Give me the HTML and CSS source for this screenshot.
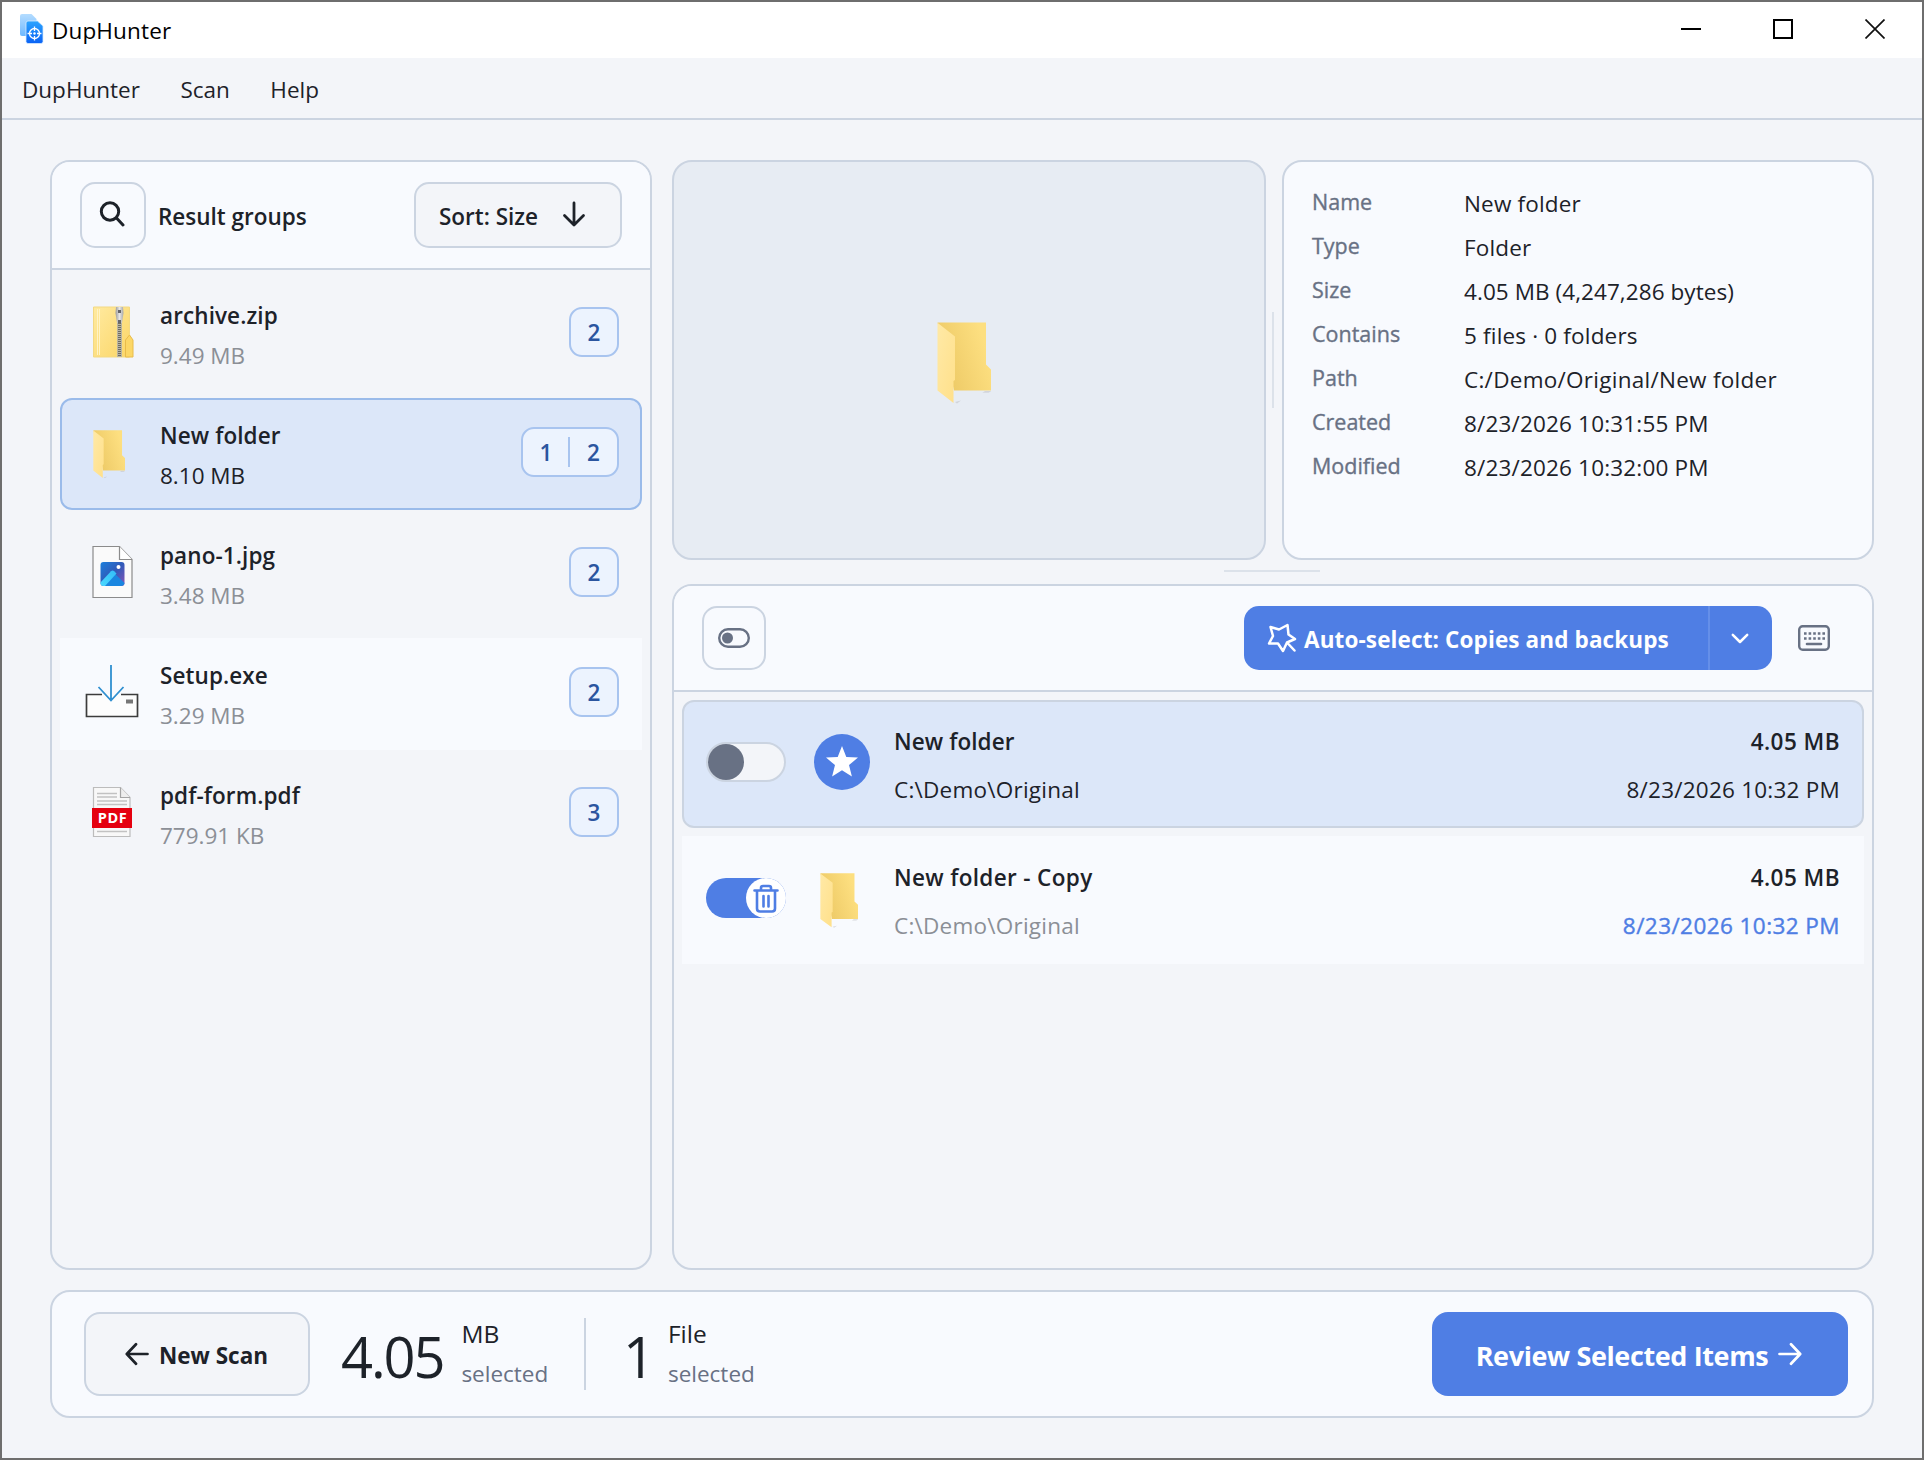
FILE: index.html
```html
<!DOCTYPE html>
<html lang="en">
<head>
<meta charset="utf-8">
<title>DupHunter</title>
<link rel="stylesheet" href="styles.css">
</head>
<body>
<svg class="defs" width="0" height="0" aria-hidden="true">
  <defs>
    <linearGradient id="folderBack" x1="0" y1="1" x2="1" y2="0.6"><stop offset="0" stop-color="#e9c45f"/><stop offset="1" stop-color="#fddf80"/></linearGradient>
    <linearGradient id="folderFlap" x1="0" y1="0" x2="1" y2="1"><stop offset="0" stop-color="#ffe9a6"/><stop offset="1" stop-color="#ffe08a"/></linearGradient>
    <linearGradient id="zipBody" x1="0" y1="0" x2="1" y2="1"><stop offset="0" stop-color="#ffeaa0"/><stop offset="1" stop-color="#fbd667"/></linearGradient>
    <linearGradient id="zipPull" x1="0" y1="0" x2="1" y2="0"><stop offset="0" stop-color="#9b9b9b"/><stop offset="0.5" stop-color="#e6e6e6"/><stop offset="1" stop-color="#a8a8a8"/></linearGradient>
    <linearGradient id="photoSky" x1="0" y1="0" x2="1" y2="1"><stop offset="0" stop-color="#1b7fdc"/><stop offset="0.5" stop-color="#3159b8"/><stop offset="1" stop-color="#8a55b5"/></linearGradient>
    <linearGradient id="photoHill" x1="1" y1="0" x2="0" y2="1"><stop offset="0" stop-color="#33bdf7"/><stop offset="1" stop-color="#4bd8ff"/></linearGradient>
    <linearGradient id="appBack" x1="0" y1="0" x2="0" y2="1"><stop offset="0" stop-color="#b4dcff"/><stop offset="1" stop-color="#6fb9ff"/></linearGradient>
    <linearGradient id="appFront" x1="0" y1="0" x2="0" y2="1"><stop offset="0" stop-color="#2ba4ff"/><stop offset="1" stop-color="#0a62f5"/></linearGradient>
    <symbol id="folder" viewBox="0 0 54 82" preserveAspectRatio="none">
      <path d="M48 69h6.500l-3 1.800h-6zM18 80l6-1.500-4 3z" fill="#c9cbd0" opacity="0.700"/>
      <path d="M0.500 0.500H49V42.500L54 47.500V68.500H17z" fill="url(#folderBack)"/>
      <path d="M0.500 0.700L18 14.500V58L16.500 59V81L0.500 68.500z" fill="url(#folderFlap)"/>
    </symbol>
  </defs>
</svg>
<div class="window">
  <header class="titlebar">
    <svg class="app-icon" viewBox="0 0 26 32">
      <path d="M3 1h9.500l5 5v17H3a2 2 0 0 1-2-2V3a2 2 0 0 1 2-2z" fill="url(#appBack)"/>
      <path d="M9 8h9.500l5.500 5v15.500a2 2 0 0 1-2 2H9a2 2 0 0 1-2-2V10a2 2 0 0 1 2-2z" fill="url(#appFront)" stroke="#d6ebff" stroke-width="0.800"/>
      <g fill="none" stroke="#fff" stroke-width="1.300"><circle cx="15.500" cy="20.500" r="5"/><path d="M15.500 13.500v4.500M15.500 23v4.500M8.500 20.500h4.500M18 20.500h4.500"/></g>
      <circle cx="15.500" cy="20.500" r="1.200" fill="#fff"/>
    </svg>
    <span class="title">DupHunter</span>
    <div class="controls">
      <svg viewBox="0 0 20 20"><path d="M0 10h20" stroke="#000" stroke-width="2"/></svg>
      <svg viewBox="0 0 20 20"><path d="M1 1h18v18H1z" fill="none" stroke="#000" stroke-width="2"/></svg>
      <svg viewBox="0 0 20 20"><path d="M0.500 0.500l19 19M19.500 0.500l-19 19" stroke="#111" stroke-width="1.700"/></svg>
    </div>
  </header>
  <nav class="menu"><span>DupHunter</span><span>Scan</span><span>Help</span></nav>

  <main class="content">
    <div class="workspace">
      <section class="panel groups">
        <div class="panel-head">
          <button class="btn icon-btn search"><svg width="26" height="26" viewBox="0 0 26 26" fill="none" stroke="#1d2229" stroke-width="3" stroke-linecap="round"><circle cx="11" cy="10.500" r="8.700"/><path d="M17.500 17l6.500 7"/></svg></button>
          <span class="head-title">Result groups</span>
          <button class="btn sort"><span>Sort: Size</span><svg width="24" height="26" viewBox="0 0 24 26" fill="none" stroke="#1d2229" stroke-width="2.800" stroke-linecap="round" stroke-linejoin="round"><path d="M12 2v22M2.500 14.500l9.500 9.500 9.500-9.500"/></svg></button>
        </div>
        <div class="group-list">
          <div class="group">
            <svg class="file-icon" viewBox="0 0 56 56">
              <path d="M9.500 3H45.500V53H9.500z" fill="url(#zipBody)" stroke="#f3d983" stroke-width="1"/>
              <path d="M13.500 5v46M15.500 5v46" stroke="#fff3c4" stroke-width="1"/>
              <path d="M41.500 53V36l4-5 3.500 5v17z" fill="#fcd766" stroke="#e9bc4b" stroke-width="1"/>
              <path d="M33 18h5v35h-5z" fill="#b9b5a2"/>
              <path d="M35.500 19v34" stroke="#6e6c63" stroke-width="3" stroke-dasharray="1 1"/>
              <path d="M32 3h7l0.500 6-1.500 10h-5L31.500 9z" fill="url(#zipPull)"/>
              <path d="M34 6h3v3h-3zM34 16h3v3h-3z" fill="#66666a"/>
            </svg>
            <div class="group-text"><div class="name">archive.zip</div><div class="size">9.49 MB</div></div>
            <div class="badge"><span>2</span></div>
          </div>
          <div class="group selected">
            <svg class="file-icon" viewBox="0 0 56 56"><use href="#folder" x="9" y="6" width="32" height="48.500"/></svg>
            <div class="group-text"><div class="name">New folder</div><div class="size">8.10 MB</div></div>
            <div class="badge double"><span>1</span><span>2</span></div>
          </div>
          <div class="group">
            <svg class="file-icon" viewBox="0 0 56 56">
              <path d="M9 2.500H35.500L48 15.500V53.500H9z" fill="#fafafa" stroke="#8b8b8b" stroke-width="1.200"/>
              <path d="M35.500 2.500v13H48" fill="#fff" stroke="#8b8b8b" stroke-width="1.200"/>
              <rect x="16.500" y="18" width="24" height="24" rx="3" fill="url(#photoSky)"/>
              <path d="M19 42L29 28l11.500 11q-.5 3-3.500 3z" fill="#1a86e0"/>
              <path d="M16.500 38.500L27 27.300q1.600-1.400 3.200 0l2.300 2.300L21 42h-1.500q-3 0-3-3z" fill="url(#photoHill)"/>
              <circle cx="34.500" cy="23" r="2" fill="#fff"/>
            </svg>
            <div class="group-text"><div class="name">pano-1.jpg</div><div class="size">3.48 MB</div></div>
            <div class="badge"><span>2</span></div>
          </div>
          <div class="group hover">
            <svg class="file-icon" viewBox="0 0 56 56">
              <path d="M18 30.500H2.500V52.500H53.500V30.500H37" fill="#fdfdfd" stroke="#3c3c3c" stroke-width="1.700"/>
              <path d="M42 35.500h7v4h-7z" fill="#777"/>
              <path d="M27 1v35M14.500 23L27 36.500 39.500 23" fill="none" stroke="#2f8fd0" stroke-width="1.800"/>
            </svg>
            <div class="group-text"><div class="name">Setup.exe</div><div class="size">3.29 MB</div></div>
            <div class="badge"><span>2</span></div>
          </div>
          <div class="group">
            <svg class="file-icon" viewBox="0 0 56 56">
              <path d="M9.500 3.500H36.500L46 13.500V52.500H9.500z" fill="#f8f8f8" stroke="#bcbcbc" stroke-width="1.200"/>
              <path d="M36.500 3.500v10H46" fill="#eee" stroke="#a5a5a5" stroke-width="1.200"/>
              <path d="M13 9.500h20M13 13h20M13 17h30M13 20.500h30M13 47.500h30" stroke="#c2c2c2" stroke-width="1.300"/>
              <path d="M8 24h40v20H8z" fill="#e5000f"/>
              <text x="28.500" y="39" text-anchor="middle" class="pdf-label">PDF</text>
            </svg>
            <div class="group-text"><div class="name">pdf-form.pdf</div><div class="size">779.91 KB</div></div>
            <div class="badge"><span>3</span></div>
          </div>
        </div>
      </section>

      <div class="right">
        <div class="top">
          <section class="preview"><svg width="54" height="82"><use href="#folder" width="54" height="82"/></svg></section>
          <div class="split-v"></div>
          <dl class="details">
            <dt>Name</dt><dd>New folder</dd>
            <dt>Type</dt><dd>Folder</dd>
            <dt>Size</dt><dd class="exact">4.05 MB (4,247,286 bytes)</dd>
            <dt>Contains</dt><dd>5 files · 0 folders</dd>
            <dt>Path</dt><dd class="location">C:/Demo/Original/New folder</dd>
            <dt>Created</dt><dd>8/23/2026 10:31:55 PM</dd>
            <dt>Modified</dt><dd>8/23/2026 10:32:00 PM</dd>
          </dl>
        </div>
        <div class="split-h"></div>
        <section class="panel files">
          <div class="files-head">
            <button class="btn icon-btn toggle-all"><svg width="32" height="20" viewBox="0 0 32 20"><rect x="1.200" y="1.200" width="29.600" height="17.600" rx="8.800" fill="none" stroke="#687184" stroke-width="2.400"/><circle cx="9.500" cy="10" r="5.500" fill="#687184"/></svg></button>
            <div class="auto">
              <button class="auto-main"><svg width="30" height="30" viewBox="0 0 30 30" fill="none" stroke="#fff" stroke-width="2.500" stroke-linejoin="round" stroke-linecap="round"><path d="M3.500 4L12 6.500 20.500 2l1 9.500L28 16l-8 3.500-4 8.500-5-7.500L2 20.500l4-7.500zM20 19.500l7.500 8"/></svg><span>Auto-select: Copies and backups</span></button>
              <button class="auto-drop"><svg width="18" height="11" viewBox="0 0 18 11" fill="none" stroke="#fff" stroke-width="2.500" stroke-linecap="round" stroke-linejoin="round"><path d="M1.800 1.800L9 9l7.200-7.200"/></svg></button>
            </div>
            <svg class="keyboard" width="32" height="26" viewBox="0 0 32 26"><rect x="1.200" y="1.200" width="29.600" height="23.600" rx="3.500" fill="none" stroke="#687184" stroke-width="2.400"/><path d="M6 8.500h21M6 13.500h21" stroke="#687184" stroke-width="2.600" stroke-dasharray="2.600 2"/><path d="M9 19h14" stroke="#687184" stroke-width="2.600" stroke-linecap="round"/></svg>
          </div>
          <div class="file-list">
            <div class="file current">
              <div class="switch"><i></i></div>
              <div class="thumb"><svg width="56" height="56" viewBox="0 0 56 56"><circle cx="28" cy="28" r="28" fill="#4f7ee4"/><path d="M28 12l4.300 10.900 11.700.7-9 7.500 2.900 11.400L28 36.200l-9.900 6.300L21 31.100l-9-7.500 11.700-.7z" fill="#fff"/></svg></div>
              <div class="file-text"><div class="name">New folder</div><div class="path">C:\Demo\Original</div></div>
              <div class="file-meta"><div class="bytes">4.05 MB</div><div class="date">8/23/2026 10:32 PM</div></div>
            </div>
            <div class="file marked">
              <div class="switch on"><i><svg width="26" height="29" viewBox="0 0 26 29" fill="none" stroke="#4f7ee4" stroke-width="2.600" stroke-linecap="round" stroke-linejoin="round"><path d="M1.500 6.500h23M8 6V4q0-2 2-2h6q2 0 2 2v2M4 7v17.500q0 3 3 3h12q3 0 3-3V7M10.500 12v10.500M15.500 12v10.500"/></svg></i></div>
              <div class="thumb"><svg width="38" height="55"><use href="#folder" width="38" height="55"/></svg></div>
              <div class="file-text"><div class="name">New folder - Copy</div><div class="path">C:\Demo\Original</div></div>
              <div class="file-meta"><div class="bytes">4.05 MB</div><div class="date">8/23/2026 10:32 PM</div></div>
            </div>
          </div>
        </section>
      </div>
    </div>

    <footer class="footer">
      <button class="btn new-scan"><svg width="24" height="24" viewBox="0 0 24 24" fill="none" stroke="#1d2229" stroke-width="2.700" stroke-linecap="round" stroke-linejoin="round"><path d="M22.500 12H2M11 2.300L1.800 12l9.200 9.700"/></svg><span>New Scan</span></button>
      <div class="stat mb"><b>4.05</b><div><div class="unit">MB</div><div class="note">selected</div></div></div>
      <div class="rule"></div>
      <div class="stat count"><b>1</b><div><div class="unit">File</div><div class="note">selected</div></div></div>
      <button class="review"><span>Review Selected Items</span><svg width="24" height="24" viewBox="0 0 24 24" fill="none" stroke="#fff" stroke-width="2.700" stroke-linecap="round" stroke-linejoin="round"><path d="M1.500 12H22M13 2.300L22.200 12 13 21.700"/></svg></button>
    </footer>
  </main>
</div>
</body>
</html>
```
FILE: styles.css
```css
* { box-sizing: border-box; }
body { margin: 0; font-family: "Open Sans", "Noto Sans", sans-serif; font-size: 22.5px; color: #1d2229; }
button { font: inherit; color: inherit; padding: 0; border: 0; background: none; display: flex; align-items: center; }
svg { display: block; flex: none; }
.defs { position: absolute; }

.window { width: 1924px; height: 1460px; border: 2px solid #6e6e6e; background: #f3f5f9; display: flex; flex-direction: column; }
.titlebar { height: 56px; background: #fff; display: flex; align-items: center; padding: 0 37px 0 17px; color: #000; }
.app-icon { width: 26px; height: 32px; margin-bottom: 2px; }
.title { margin-left: 7px; letter-spacing: 0.15px; }
.controls { margin-left: auto; display: flex; gap: 72px; margin-bottom: 2px; }
.controls svg { width: 20px; height: 20px; }
.menu { height: 62px; border-bottom: 2px solid #cbd4e1; display: flex; align-items: center; gap: 40.5px; padding-left: 20px; padding-top: 2px; }

.content { flex: 1; padding: 40px 48px; display: flex; flex-direction: column; gap: 20px; }
.workspace { height: 1110px; display: flex; gap: 20px; }
.panel { border: 2px solid #cbd4e1; border-radius: 20px; overflow: hidden; }
.btn { border: 2px solid #cbd4e1; border-radius: 15px; justify-content: center; background: #f3f5f9; }
.icon-btn { background: #f8fafe; }

.groups { width: 602px; }
.panel-head { height: 108px; background: #f8fafe; border-bottom: 2px solid #cbd4e1; display: flex; align-items: center; padding: 0 28px; }
.search { width: 66px; height: 66px; padding: 0 2px 2px 0; }
.head-title { margin-left: 12px; font-weight: 600; margin-top: 2px; }
.sort { margin-left: auto; width: 208px; height: 66px; gap: 24px; font-weight: 600; padding: 2px 11px 0 0; }
.sort svg { margin-bottom: 5px; }
.group-list { padding: 8px; display: flex; flex-direction: column; gap: 8px; }
.group { height: 112px; display: flex; align-items: center; padding: 0 23px 0 24px; }
.group.hover { background: #f8fafe; }
.group.selected { background: #dce7f9; border: 2px solid #9abbea; border-radius: 12px; padding: 0 21px 0 22px; }
.file-icon { width: 56px; height: 56px; margin-bottom: 4px; }
.pdf-label { font: 700 14.500px "Open Sans", sans-serif; fill: #fff; letter-spacing: 0.5px; }
.group-text { margin-left: 20px; line-height: 40px; padding-top: 3px; }
.name { font-weight: 600; letter-spacing: 0.1px; }
.size { color: #8b8f96; }
.path { color: #8b8f96; letter-spacing: 0.23px; }
.selected .size, .current .path { color: #1d2229; }
.badge { margin-left: auto; margin-bottom: 4px; height: 50px; border: 2px solid #a8c4ef; border-radius: 13px; background: #ecf3fe; color: #2b559f; font-weight: 600; display: flex; align-items: center; }
.badge span { width: 46px; text-align: center; line-height: 28px; position: relative; padding-top: 2px; }
.badge.double span:first-child { width: 45px; padding-left: 1px; }
.badge.double span + span { width: 49px; border-left: 2px solid #a8c4ef; }

.right { width: 1202px; display: flex; flex-direction: column; }
.top { height: 400px; display: flex; }
.preview { width: 594px; border: 2px solid #cbd4e1; border-radius: 20px; background: #e7ecf3; display: flex; align-items: center; justify-content: center; padding: 5px 0 0 0; }
.preview svg { margin-right: 10px; }
.split-v { width: 2px; height: 96px; background: #dce2ea; margin: 152px 8px 0 6px; }
.details { margin: 0; width: 592px; border: 2px solid #cbd4e1; border-radius: 20px; background: #f8fafe; padding: 20px 28px; display: grid; grid-template-columns: 152px 1fr; grid-auto-rows: 44px; line-height: 44px; align-content: start; }
dt { color: #687184; font-size: 21.500px; margin-top: -2px; -webkit-text-stroke: 0.35px #687184; }
dd { margin: 0; letter-spacing: 0.17px; }
dd.exact { letter-spacing: 0.07px; }
dd.location { letter-spacing: 0.27px; }
.split-h { width: 96px; height: 2px; background: #dce2ea; margin: 10px 0 12px 552px; }

.files { flex: 1; }
.files-head { height: 106px; background: #f8fafe; border-bottom: 2px solid #cbd4e1; display: flex; align-items: center; padding: 0 42px 0 28px; }
.toggle-all { width: 64px; height: 64px; }
.auto { margin-left: auto; display: flex; width: 528px; height: 64px; border-radius: 15px; background: #4f7ee4; color: #fff; font-weight: 700; }
.auto-main { width: 464px; padding-left: 23px; gap: 7px; }
.auto-main span { padding-top: 2px; white-space: nowrap; letter-spacing: 0.12px; }
.auto-drop { flex: 1; justify-content: center; border-left: 2px solid #658fe9; padding-right: 3px; }
.keyboard { margin-left: 26px; }
.file-list { padding: 8px; display: flex; flex-direction: column; gap: 8px; }
.file { height: 128px; display: flex; align-items: center; padding: 0 24px; border: 0 solid #cbd4e1; }
.current { background: #dce7f9; border-width: 2px; border-radius: 12px; padding: 0 22px; }
.marked { background: #f8fafe; }
.switch { width: 80px; height: 40px; border: 2px solid #cbd4e1; border-radius: 20px; background: #f3f5f9; display: flex; margin-bottom: 4px; }
.switch i { width: 36px; height: 36px; border-radius: 50%; background: #687184; }
.switch.on { border: 0; background: #4f7ee4; justify-content: flex-end; }
.switch.on i { width: 40px; height: 40px; background: #fff; display: flex; align-items: center; justify-content: center; }
.thumb { width: 56px; margin: 0 0 4px 28px; display: flex; }
.marked .thumb { padding-left: 6px; margin-bottom: 0; }
.file-text { margin-left: 24px; line-height: 48px; padding-top: 3px; }
.marked .name { letter-spacing: 0.35px; }
.file-meta { margin-left: auto; line-height: 48px; padding-top: 3px; text-align: right; }
.bytes { font-weight: 600; letter-spacing: 0.45px; }
.date { letter-spacing: 0.23px; }
.marked .date { color: #4f7ee4; letter-spacing: 0.43px; -webkit-text-stroke: 0.4px #4f7ee4; }

.footer { height: 128px; border: 2px solid #cbd4e1; border-radius: 20px; background: #f8fafe; display: flex; align-items: center; padding: 0 24px 0 32px; }
.new-scan { width: 226px; height: 84px; gap: 10px; font-weight: 700; border-radius: 16px; padding-right: 1px; }
.new-scan span, .review span { padding-top: 2px; }
.stat { display: flex; line-height: 40px; align-items: center; }
.stat b { font-weight: 400; font-size: 56px; padding-top: 3px; letter-spacing: -2.1px; }
.mb { margin-left: 31px; width: 243px; gap: 18px; }
.rule { width: 2px; height: 72px; background: #cbd4e1; }
.count { margin-left: 37px; gap: 15px; }
.unit { font-size: 24.5px; }
.note { color: #687184; }
.review { margin-left: auto; width: 416px; height: 84px; border-radius: 16px; background: #4f7ee4; color: #fff; font-weight: 700; font-size: 27px; justify-content: center; gap: 10px; padding-right: 2px; }
.review span { letter-spacing: -0.38px; }
```
